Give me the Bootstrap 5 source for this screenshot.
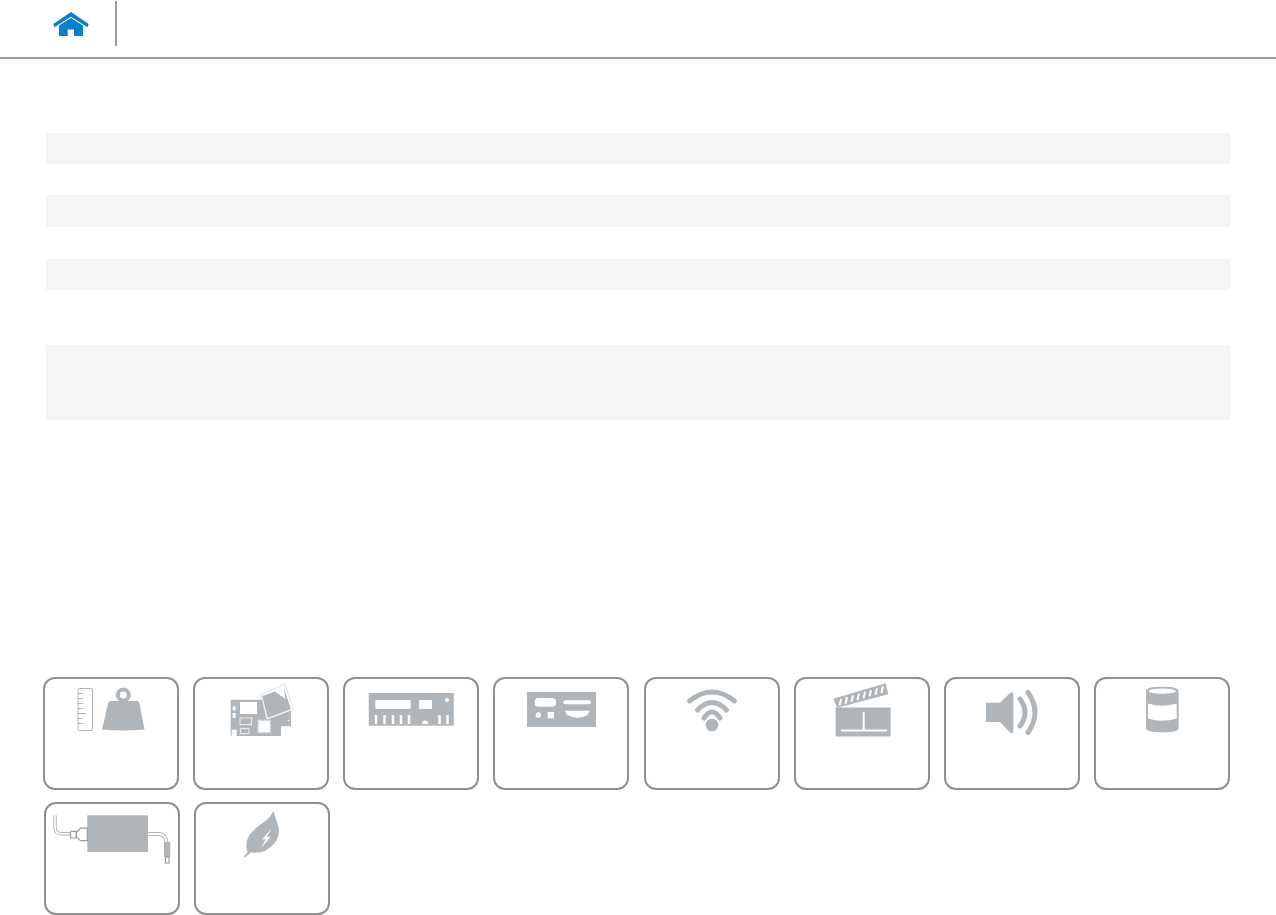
<!DOCTYPE html>
<html lang="en">
<head>
  <meta charset="UTF-8" />
  <meta name="viewport" content="width=device-width, initial-scale=1" />
  <title>Specifications</title>
  <link href="https://cdn.jsdelivr.net/npm/bootstrap@5.3.0/dist/css/bootstrap.min.css" rel="stylesheet" />
  <style>
    body {
      background-color: #fff;
      font-family: "Liberation Sans", Arial, sans-serif;
    }
    .top-bar {
      height: 59px;
      border-bottom: 2px solid #9c9ea1;
    }
    .home-link {
      width: 117px;
      height: 45px;
      margin-top: 1px;
      padding: 11px 0 0 53px;
      border-right: 2px solid #9c9ea1;
    }
    .spec-area {
      padding: 74px 46px 0 46px;
    }
    .spec-row {
      height: 31px;
    }
    .spec-row:nth-child(odd) {
      background-color: #f5f5f5;
    }
    .spec-row.spec-wide {
      height: 32px;
    }
    .spec-row.spec-gap {
      height: 55px;
    }
    .spec-row.spec-tall {
      height: 75px;
    }
    .tile-area {
      margin-top: 257px;
      padding: 0 46px 0 43px;
    }
    .tile-grid {
      display: grid;
      grid-template-columns: repeat(8, 136px);
      justify-content: space-between;
    }
    .tile-grid-second {
      margin-top: 12.5px;
      margin-left: 1px;
      column-gap: 14px;
      justify-content: start;
      grid-template-columns: repeat(2, 136px);
    }
    .tile {
      height: 112.5px;
      border: 2px solid #8e9091;
      border-radius: 12px;
      overflow: hidden;
      display: block;
    }
    .tile svg {
      display: block;
    }
    .ic {
      fill: #b0b5ba;
    }
    .ic-w {
      fill: #fff;
    }
    .ic-line {
      fill: none;
      stroke: #b0b5ba;
      stroke-width: 5;
      stroke-linecap: round;
    }
    .ic-thin {
      fill: none;
      stroke: #b0b5ba;
      stroke-width: 1;
    }
    .ic-outline {
      fill: none;
      stroke: #9a9fa4;
      stroke-width: 1.2;
    }
  </style>
</head>
<body>

  <header class="top-bar d-flex align-items-start">
    <a class="home-link d-block" href="#" aria-label="Home">
      <svg width="36" height="25" viewBox="53 12 36 25">
        <path fill="#0a7fcb" d="M71 12 88.7 24 87.5 27.3 71 16.8 54.5 27.3 53.3 24Z" />
        <path fill="#0a7fcb" d="M59 25.6 71 17.9 83 25.6V36H74V29.5H67.7V36H59Z" />
      </svg>
    </a>
  </header>

  <main class="spec-area">
    <div class="spec-row"></div>
    <div class="spec-row"></div>
    <div class="spec-row spec-wide"></div>
    <div class="spec-row spec-wide"></div>
    <div class="spec-row"></div>
    <div class="spec-row spec-gap"></div>
    <div class="spec-row spec-tall"></div>
  </main>

  <section class="tile-area">
    <div class="tile-grid">
      <a class="tile" href="#" aria-label="Dimensions and weight">
        <svg width="132" height="108" viewBox="2 2 132 108">
          <rect class="ic-thin" x="35" y="11.5" width="14.5" height="42" rx="1.5" />
          <path class="ic-thin" d="M35 16.5h5M35 21.5h5M35 26.5h5M35 31.5h5M35 36.5h8M35 41.5h5M35 46.5h5" />
          <circle cx="80.3" cy="18" r="5.5" fill="none" stroke="#b0b5ba" stroke-width="4" />
          <path class="ic" d="M68 24H93.5Q96 24 96.5 27L101.5 52.5Q90 53.5 80 53.5T59 52.5L65 27Q65.5 24 68 24Z" />
        </svg>
      </a>
      <a class="tile" href="#" aria-label="System board">
        <svg width="132" height="108" viewBox="2 2 132 108">
          <path class="ic" d="M37.7 22.7H70V30H98V49.3H88V59H43.7V52.7H38.7V59H37.7Z" />
          <rect class="ic-w" x="47" y="25" width="17" height="12" />
          <rect class="ic-w" x="39.7" y="29.3" width="3" height="4" />
          <rect class="ic-w" x="39.7" y="36" width="3" height="5" />
          <rect x="47" y="41" width="11.7" height="6.7" fill="none" stroke="#fff" stroke-width=".8" />
          <rect x="47.7" y="51.7" width="8.3" height="5" fill="none" stroke="#fff" stroke-width=".8" />
          <rect class="ic-w" x="65.5" y="43.7" width="11.4" height="11.4" />
          <path fill="none" stroke="#fff" stroke-dasharray="1 1" d="M64.9 43.2H77.5V55.7H64.9Z" />
          <rect class="ic-w" x="94.7" y="42.7" width="1.4" height="1.4" />
          <path class="ic-w" d="M68 17.7 92 7 100.3 32.7 73.7 42.7Z" />
          <path class="ic" d="M69.3 19.3 90.7 11 98 32 74.7 41Z" />
          <path class="ic-w" d="M81.3 14.3 90.7 10.5 92.3 21.7Z" />
          <path fill="none" stroke="#c9ccd0" stroke-width=".6" d="M68 17.7 92 7 100.3 32.7 73.7 42.7Z" />
        </svg>
      </a>
      <a class="tile" href="#" aria-label="Ports and connectors">
        <svg width="132" height="108" viewBox="2 2 132 108">
          <rect class="ic" x="25.7" y="16" width="85" height="32.7" />
          <rect class="ic-w" x="32.3" y="23" width="35.4" height="9" rx="1" />
          <rect class="ic-w" x="76" y="23" width="13" height="9" rx="1" />
          <circle class="ic-w" cx="104" cy="23" r="2" />
          <path fill="none" stroke="#fff" stroke-width="2.5" d="M33 38v9M41.5 38v9M50 38v9M58 38v9M66 38v9M96.5 38v9M104.5 38v9" />
          <path class="ic-w" d="M79 47a3.2 3.6 0 0 1 6.4 0Z" />
        </svg>
      </a>
      <a class="tile" href="#" aria-label="Communications">
        <svg width="132" height="108" viewBox="2 2 132 108">
          <rect class="ic" x="34" y="15" width="69" height="35" />
          <rect class="ic-w" x="41.7" y="21" width="21.3" height="8.7" rx="4" />
          <rect class="ic-w" x="70.3" y="23.3" width="27.7" height="4" rx="2" />
          <circle class="ic-w" cx="45.3" cy="38" r="2.7" />
          <rect class="ic-w" x="54.7" y="35" width="6.3" height="6.3" />
          <path class="ic-w" d="M71.7 33.7H97L94.5 38Q84.5 43.5 74.2 38Z" />
        </svg>
      </a>
      <a class="tile" href="#" aria-label="Wireless">
        <svg width="132" height="108" viewBox="2 2 132 108">
          <path class="ic-line" d="M45.5 24Q68 6 90.5 24" />
          <path class="ic-line" d="M53.5 33Q68 18 82.5 33" />
          <path class="ic-line" d="M60 41Q68 29 76 41" />
          <circle class="ic" cx="68" cy="48" r="6.3" />
        </svg>
      </a>
      <a class="tile" href="#" aria-label="Video">
        <svg width="132" height="108" viewBox="2 2 132 108">
          <rect class="ic" x="41.7" y="30.5" width="55" height="29" />
          <path class="ic" d="M39.3 21.8 91.7 6.3 94.3 17.3 43.3 30.7Z" />
          <path fill="none" stroke="#fff" stroke-width="2" d="M47 22 45.5 28.5M53 20.2 51.5 26.7M59 18.4 57.5 24.9M65 16.6 63.5 23.1M71 14.8 69.5 21.3M77 13 75.5 19.5M83 11.2 81.5 17.7M89 9.4 87.5 15.9" />
          <path fill="none" stroke="#fff" stroke-width="2" d="M46.7 53.5H93.3M69.7 35.3V53.5" />
        </svg>
      </a>
      <a class="tile" href="#" aria-label="Audio">
        <svg width="132" height="108" viewBox="2 2 132 108">
          <path class="ic" d="M42 25.7H56L66 16Q69.3 14 69.3 17V54Q69.3 57.5 66 55.5L56 45H42Z" />
          <path class="ic-line" d="M76 22Q86 35.5 76 49" />
          <path class="ic-line" d="M84 15.5Q98 35.5 84 55.5" />
        </svg>
      </a>
      <a class="tile" href="#" aria-label="Storage">
        <svg width="132" height="108" viewBox="2 2 132 108">
          <path class="ic" d="M52 14Q52 9.7 68.3 9.7T84.7 14V51Q84.7 55.3 68.3 55.3T52 51Z" />
          <ellipse class="ic-w" cx="68.3" cy="14.2" rx="13.5" ry="2.6" />
          <path class="ic-w" d="M54 26.5Q68.3 31 82.7 26.5V41.5Q68.3 46 54 41.5Z" />
        </svg>
      </a>
    </div>

    <div class="tile-grid tile-grid-second">
      <a class="tile" href="#" aria-label="Power adapter">
        <svg width="132" height="108" viewBox="2 2 132 108">
          <rect class="ic" x="43.3" y="13.3" width="60.7" height="36.7" />
          <path fill="none" stroke="#b0b5ba" stroke-width="3.4" d="M11 13.3V25Q11 31.7 17 31.7H26.3" />
          <path fill="none" stroke="#fff" stroke-width="1.6" d="M11 13.3V25Q11 31.7 17 31.7H26.3" />
          <path class="ic-outline" d="M26.6 29.3H32.3V36H26.6Z" />
          <path class="ic-outline" d="M32.3 30.5 36.5 26.2H43.3V38.6H36.5L32.3 34.6Z" />
          <path fill="none" stroke="#b0b5ba" stroke-width="4" d="M104 32H114Q121.5 32 122.5 40" />
          <path fill="none" stroke="#fff" stroke-width="1.8" d="M104 32H114Q121.5 32 122.5 40" />
          <rect class="ic" x="120" y="40" width="6.3" height="15" rx="1" />
          <rect x="121.4" y="55" width="3.6" height="6" class="ic-outline" />
        </svg>
      </a>
      <a class="tile" href="#" aria-label="Power and thermal">
        <svg width="132" height="108" viewBox="2 2 132 108">
          <path class="ic" d="M79.3 9Q82 17 84 23 87 33 80 42 71 52 57 50.5L51 55.5 50 54.5 53.5 50.5Q50.5 42 55 33.5 60 27 70 20 77 15 79.3 9Z" />
          <path class="ic-w" d="M76.7 27.5 68.3 37.3H72L67 46.3 76.7 34.7H72.7L77 27.5Z" />
        </svg>
      </a>
    </div>
  </section>

</body>
</html>
